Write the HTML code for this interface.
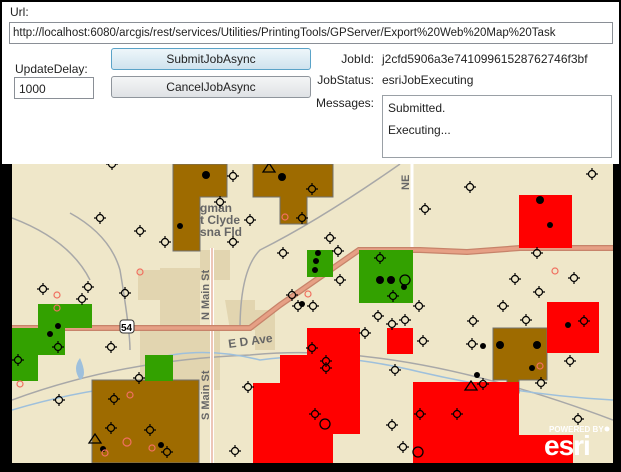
<!DOCTYPE html>
<html><head><meta charset="utf-8"><style>
*{margin:0;padding:0;box-sizing:border-box}
html,body{width:621px;height:472px;overflow:hidden}
body{background:#000;position:relative;font-family:"Liberation Sans",sans-serif;font-size:12px;color:#222}
#ui{position:absolute;left:2px;top:2px;width:617px;height:162px;background:#fff}
.a{position:absolute;white-space:nowrap}
.tb{position:absolute;border:1px solid #8a8f96;background:#fff}
.btn{position:absolute;border:1px solid #8f959c;border-radius:3px;background:linear-gradient(#f4f5f6,#dfe2e5);text-align:center;line-height:20px}
#map{position:absolute;left:12px;top:164px;width:601px;height:299px;overflow:hidden;background:#efe7c9}
svg{display:block}
</style></head><body>
<div id="ui">
<div class="a" style="left:8px;top:3px">Url:</div>
<div class="tb" style="left:7px;top:20px;width:604px;height:22px"></div>
<div class="a" style="left:11px;top:25px;font-size:11.5px">http://localhost:6080/arcgis/rest/services/Utilities/PrintingTools/GPServer/Export%20Web%20Map%20Task</div>
<div class="a" style="left:13px;top:60px">UpdateDelay:</div>
<div class="tb" style="left:12px;top:75px;width:80px;height:22px"></div>
<div class="a" style="left:17px;top:80px">1000</div>
<div class="btn" style="left:109px;top:46px;width:200px;height:22px;border-color:#5aa3c8;background:linear-gradient(#eef6fa,#cfe3ee)">SubmitJobAsync</div>
<div class="btn" style="left:109px;top:74px;width:200px;height:22px">CancelJobAsync</div>
<div class="a" style="right:245px;top:50px">JobId:</div>
<div class="a" style="left:380px;top:50px">j2cfd5906a3e74109961528762746f3bf</div>
<div class="a" style="right:245px;top:71px">JobStatus:</div>
<div class="a" style="left:380px;top:71px">esriJobExecuting</div>
<div class="a" style="right:245px;top:94px">Messages:</div>
<div class="tb" style="left:380px;top:93px;width:230px;height:63px;border-color:#9aa0a6"></div>
<div class="a" style="left:386px;top:99px">Submitted.</div>
<div class="a" style="left:386px;top:121px">Executing...</div>
</div>
<div id="map">
<svg width="601" height="299" viewBox="12 164 601 299" xmlns="http://www.w3.org/2000/svg" font-family="Liberation Sans,sans-serif">
<defs><g id="w"><circle r="3.5" fill="none" stroke="#000" stroke-width="1.2"/><path d="M0-6V-3.5M0 3.5V6M-6 0H-3.5M3.5 0H6" stroke="#000" stroke-width="1.2"/></g></defs>
<g fill="#e2d5b0"><path d="M160 268h40v60h-40zM138 270h30v30h-30zM140 330h80v60h-80zM200 250h30v30h-30zM225 300h30v30h-25zM255 310h20v40h-20z"/></g>
<path d="M70 213 Q110 235 120 270 Q130 330 130 350" stroke="#a8a8a8" stroke-width="1.5" fill="none"/>
<path d="M12 218 Q70 240 90 280" stroke="#a8a8a8" stroke-width="1.5" fill="none"/>
<path d="M400 164 Q320 220 260 250 Q240 270 240 330" stroke="#a8a8a8" stroke-width="1.5" fill="none"/>
<path d="M12 400 Q120 360 250 355 Q400 340 613 420" stroke="#a8a8a8" stroke-width="1.5" fill="none"/>
<path d="M12 410 Q80 390 140 385 M150 360 Q200 345 260 360 Q330 350 420 372 Q520 395 613 400" stroke="#9ec0dc" stroke-width="1.5" fill="none"/>
<path d="M80 358 q-8 10 0 22 q8-4 0-22z" fill="#9ec0dc"/>
<path d="M212 248V463" stroke="#fff" stroke-width="4"/><path d="M212 248V463" stroke="#e7b4a0" stroke-width="1.5"/>
<path d="M412 164V250" stroke="#fff" stroke-width="3"/>
<path d="M12 328H250L280 305L359 250H420L467 252L520 248H613" stroke="#c7836a" stroke-width="6" fill="none"/>
<path d="M12 328H250L280 305L359 250H420L467 252L520 248H613" stroke="#e6a085" stroke-width="3.5" fill="none"/>
<g stroke="#707070" stroke-width="1">
<path d="M173 164H227V197H200V251H173Z" fill="#9e6b00"/>
<path d="M253 164H333V197H307V224H280V197H253Z" fill="#9e6b00"/>
<path d="M493 328H547V380H519V393H507V380H493Z" fill="#9e6b00"/>
<path d="M92 380H199V463H92Z" fill="#9e6b00"/>
</g>
<g fill="#33a100">
<rect x="307" y="250" width="26" height="27"/><rect x="359" y="250" width="54" height="53"/>
<path d="M38 304H92V328H65V355H38V381H12V328H38Z"/><rect x="145" y="355" width="28" height="26"/>
</g>
<g fill="#ff0000">
<rect x="519" y="195" width="53" height="53"/><rect x="547" y="302" width="52" height="51"/>
<rect x="387" y="328" width="26" height="26"/>
<path d="M307 328H360V434H333V463H253V383H280V355H307Z"/>
<path d="M413 382H519V435H573V463H413Z"/>
</g>
<g font-size="12" fill="#666" font-weight="bold">
<text x="200" y="212">gman</text><text x="200" y="224">t Clyde</text><text x="200" y="236">sna Fld</text>
<text transform="translate(209 320) rotate(-90)" font-size="11">N Main St</text>
<text transform="translate(209 420) rotate(-90)" font-size="11">S Main St</text>
<text x="228" y="345" transform="rotate(-8 250 340)">E D Ave</text>
<text transform="translate(409 190) rotate(-90)" font-size="11">NE</text>
</g>
<rect x="120" y="320" width="14" height="13" rx="3" fill="#fff" stroke="#333"/><text x="121" y="331" font-size="10" font-weight="bold">54</text>
<g>
<use href="#w" x="112" y="164"/>
<use href="#w" x="233" y="176"/><use href="#w" x="100" y="218"/><use href="#w" x="140" y="231"/><use href="#w" x="165" y="242"/>
<use href="#w" x="250" y="220"/><use href="#w" x="233" y="242"/><use href="#w" x="220" y="202"/><use href="#w" x="312" y="189"/>
<use href="#w" x="302" y="218"/><use href="#w" x="330" y="238"/><use href="#w" x="283" y="253"/><use href="#w" x="338" y="251"/>
<use href="#w" x="470" y="187"/><use href="#w" x="425" y="209"/><use href="#w" x="592" y="174"/><use href="#w" x="537" y="253"/>
<use href="#w" x="515" y="279"/><use href="#w" x="574" y="278"/><use href="#w" x="539" y="292"/><use href="#w" x="526" y="320"/>
<use href="#w" x="473" y="321"/><use href="#w" x="43" y="289"/><use href="#w" x="88" y="287"/><use href="#w" x="125" y="293"/>
<use href="#w" x="82" y="299"/><use href="#w" x="292" y="295"/><use href="#w" x="298" y="306"/><use href="#w" x="313" y="306"/>
<use href="#w" x="378" y="316"/><use href="#w" x="405" y="320"/><use href="#w" x="419" y="306"/><use href="#w" x="392" y="324"/>
<use href="#w" x="365" y="333"/><use href="#w" x="423" y="341"/><use href="#w" x="472" y="344"/><use href="#w" x="395" y="370"/>
<use href="#w" x="111" y="347"/><use href="#w" x="312" y="348"/><use href="#w" x="326" y="361"/><use href="#w" x="248" y="387"/>
<use href="#w" x="139" y="378"/><use href="#w" x="59" y="400"/><use href="#w" x="114" y="399"/><use href="#w" x="111" y="428"/>
<use href="#w" x="150" y="430"/><use href="#w" x="167" y="452"/><use href="#w" x="235" y="451"/><use href="#w" x="315" y="414"/>
<use href="#w" x="392" y="425"/><use href="#w" x="403" y="447"/><use href="#w" x="420" y="414"/><use href="#w" x="457" y="414"/>
<use href="#w" x="483" y="384"/><use href="#w" x="541" y="383"/><use href="#w" x="578" y="419"/><use href="#w" x="503" y="306"/>
<use href="#w" x="380" y="258"/><use href="#w" x="393" y="296"/><use href="#w" x="340" y="280"/><use href="#w" x="326" y="368"/>
<use href="#w" x="584" y="321"/><use href="#w" x="570" y="361"/><use href="#w" x="18" y="360"/><use href="#w" x="58" y="347"/>
</g>
<g fill="#000">
<circle cx="180" cy="226" r="3"/><circle cx="318" cy="253" r="3"/><circle cx="316" cy="261" r="3"/><circle cx="315" cy="270" r="3"/>
<circle cx="391" cy="280" r="4"/><circle cx="58" cy="326" r="3"/><circle cx="50" cy="334" r="3"/>
<circle cx="483" cy="346" r="3"/><circle cx="532" cy="368" r="3"/><circle cx="161" cy="445" r="3"/><circle cx="302" cy="304" r="3"/>
<circle cx="206" cy="175" r="4"/><circle cx="282" cy="177" r="4"/><circle cx="540" cy="200" r="4"/><circle cx="550" cy="225" r="3"/>
<circle cx="568" cy="325" r="3"/><circle cx="500" cy="345" r="4"/><circle cx="537" cy="345" r="4"/><circle cx="103" cy="449" r="3"/>
<circle cx="380" cy="280" r="4"/><circle cx="477" cy="375" r="3"/><circle cx="404" cy="287" r="3"/>
</g>
<g fill="none" stroke="#000" stroke-width="1.3">
<path d="M263 172l6-9 6 9z"/><path d="M89 443l6-9 6 9z"/><path d="M465 390l6-9 6 9z"/>
<circle cx="325" cy="424" r="5"/><circle cx="418" cy="452" r="5"/><circle cx="405" cy="280" r="5"/>
</g>
<g fill="none" stroke="#f07060" stroke-width="1.2">
<circle cx="57" cy="295" r="3"/><circle cx="57" cy="308" r="3"/><circle cx="140" cy="272" r="3"/><circle cx="308" cy="294" r="3"/>
<circle cx="555" cy="271" r="3"/><circle cx="540" cy="366" r="3"/><circle cx="20" cy="384" r="3"/><circle cx="127" cy="442" r="4"/>
<circle cx="130" cy="395" r="3"/><circle cx="105" cy="453" r="3"/><circle cx="152" cy="448" r="3"/><circle cx="285" cy="217" r="3"/>
</g>
<text x="549" y="432" font-size="8" fill="#fff" font-weight="bold">POWERED BY</text>
<circle cx="607" cy="429" r="2.5" fill="#fff"/>
<text x="544" y="455" font-size="28" fill="#fff" font-weight="bold" letter-spacing="-1">esri</text>
</svg>
</div>
</body></html>
